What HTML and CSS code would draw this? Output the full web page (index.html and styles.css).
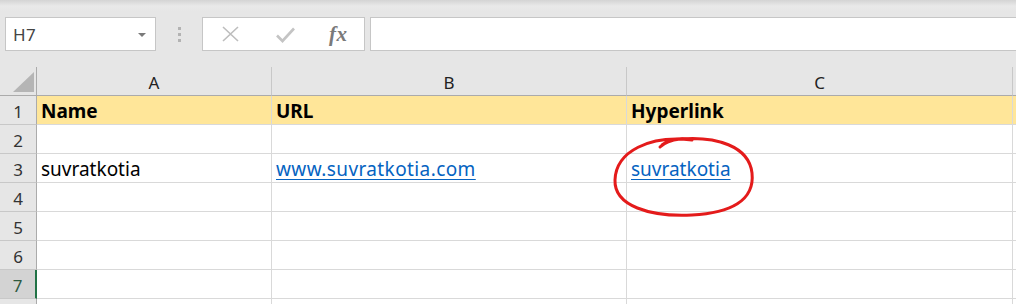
FILE: index.html
```html
<!DOCTYPE html>
<html>
<head>
<meta charset="utf-8">
<link rel="stylesheet" href="styles.css">
</head>
<body>
<div class="app">
  <div class="formula-row">
    <div class="namebox">
      <span class="ref">H7</span>
      <svg class="dd" width="8" height="4" viewBox="0 0 8 4"><path d="M0 0H8L4 4Z" fill="#7a7a7a"/></svg>
    </div>
    <div class="grip"><i></i><i></i><i></i></div>
    <div class="fbtns">
      <span class="btn b-x"><svg width="17" height="16" viewBox="0 0 17 16"><path d="M1 1L16 15M16 1L1 15" stroke="#bdbdbd" stroke-width="1.6" fill="none"/></svg></span>
      <span class="btn b-ok"><svg width="19" height="16" viewBox="0 0 19 16"><path d="M1 8.5L6.5 14L18 1.5" stroke="#c4c4c4" stroke-width="2.6" fill="none"/></svg></span>
      <span class="btn b-fx">fx</span>
    </div>
    <div class="finput"></div>
  </div>

  <div class="sheet">
    <div class="corner"><svg width="37" height="29" viewBox="0 0 37 29"><path d="M34 5V25H13Z" fill="#b5b5b5"/></svg></div>
    <div class="colh">A</div>
    <div class="colh">B</div>
    <div class="colh">C</div>
    <div class="colh last"></div>

    <div class="rowh">1</div>
    <div class="cell hdr"><b>Name</b></div>
    <div class="cell hdr"><b>URL</b></div>
    <div class="cell hdr"><b>Hyperlink</b></div>
    <div class="cell hdr"></div>

    <div class="rowh">2</div>
    <div class="cell"></div><div class="cell"></div><div class="cell"></div><div class="cell"></div>

    <div class="rowh">3</div>
    <div class="cell">suvratkotia</div>
    <div class="cell"><a class="link url">www.suvratkotia.com</a></div>
    <div class="cell"><a class="link">suvratkotia</a></div>
    <div class="cell"></div>

    <div class="rowh">4</div>
    <div class="cell"></div><div class="cell"></div><div class="cell"></div><div class="cell"></div>
    <div class="rowh">5</div>
    <div class="cell"></div><div class="cell"></div><div class="cell"></div><div class="cell"></div>
    <div class="rowh">6</div>
    <div class="cell"></div><div class="cell"></div><div class="cell"></div><div class="cell"></div>
    <div class="rowh sel">7</div>
    <div class="cell"></div><div class="cell"></div><div class="cell"></div><div class="cell"></div>
    <div class="rowh"></div>
    <div class="cell"></div><div class="cell"></div><div class="cell"></div><div class="cell"></div>
  </div>

  <svg class="annot" width="1016" height="304" viewBox="0 0 1016 304">
    <path d="M692 140 C650 135 616 151 615 180 C614 206 650 217 692 215 C730 213 755 201 752 173 C749 146 716 136 680 139 C672 140 664 143 660 147 M662 145 C668 140 678 138 688 139" stroke="#e41b1b" stroke-width="3" fill="none" stroke-linecap="round" stroke-linejoin="round"/>
  </svg>
</div>
</body>
</html>
```

FILE: styles.css
```css
* { box-sizing: border-box; }
html, body { margin: 0; padding: 0; }
body {
  width: 1016px;
  height: 304px;
  overflow: hidden;
  background: #e6e6e6;
  font-family: "Noto Sans", "Open Sans", sans-serif;
}
.app {
  position: relative;
  width: 1016px;
  height: 304px;
  overflow: hidden;
  background: linear-gradient(#d4d4d4 0px, #e9e9e9 6px, #e6e6e6 12px);
}
.formula-row {
  display: flex;
  height: 67px;
  padding: 17px 0 0 5px;
}
.namebox {
  width: 151px;
  height: 34px;
  background: #fff;
  border: 1px solid #c6c6c6;
  display: flex;
  align-items: center;
  justify-content: space-between;
  padding: 0 9px 0 7px;
}
.ref {
  font-size: 17px;
  color: #444;
  letter-spacing: 0.3px;
}
.dd { margin-top: 1px; }
.grip {
  width: 46px;
  height: 34px;
  display: flex;
  flex-direction: column;
  align-items: center;
  justify-content: center;
  gap: 3px;
  padding-top: 1px;
}
.grip i {
  display: block;
  width: 3px;
  height: 3px;
  background: #b3b3b3;
}
.fbtns {
  width: 163px;
  height: 34px;
  background: #fff;
  border: 1px solid #c6c6c6;
  display: flex;
  align-items: center;
  padding-left: 19px;
}
.btn { display: flex; align-items: center; }
.b-x { width: 54px; }
.b-ok { width: 53px; padding-top: 1px; }
.b-fx {
  font-family: "Liberation Serif", serif;
  font-style: italic;
  font-weight: bold;
  font-size: 21px;
  color: #7a7a7a;
  letter-spacing: 0.5px;
}
.finput {
  flex: 1;
  height: 34px;
  margin-left: 5px;
  margin-right: -3px;
  background: #fff;
  border: 1px solid #c6c6c6;
}

.sheet {
  display: grid;
  grid-template-columns: 37px 235px 355px 386px 1fr;
  grid-auto-rows: 29px;
}
.corner {
  border-right: 1px solid #ababab;
  border-bottom: 1px solid #ababab;
}
.corner svg { display: block; }
.colh {
  border-right: 1px solid #c8c8c8;
  border-bottom: 1px solid #ababab;
  display: flex;
  align-items: flex-end;
  justify-content: center;
  padding-bottom: 1px;
  font-size: 17px;
  color: #222;
  line-height: 22px;
}
.colh.last { border-right: none; }
.rowh {
  background: #e6e6e6;
  border-right: 1px solid #ababab;
  border-bottom: 1px solid #c8c8c8;
  display: flex;
  align-items: flex-end;
  justify-content: center;
  padding-bottom: 1px;
  font-size: 17px;
  color: #333;
  line-height: 22px;
}
.rowh.sel {
  background: #d3d3d3;
  border-right: 2px solid #217346;
  color: #2f5a40;
}
.cell {
  background: #fff;
  border-right: 1px solid #d9d9d9;
  border-bottom: 1px solid #d9d9d9;
  display: flex;
  align-items: flex-end;
  padding: 0 0 1px 4px;
  font-size: 19px;
  line-height: 23px;
  color: #000;
  white-space: nowrap;
}
.cell.hdr { background: #ffe699; }
.cell b { font-weight: bold; }
.link {
  color: #0563c1;
  text-decoration: underline;
  text-decoration-thickness: 1px;
  text-underline-offset: 3px;
}
.link.url { letter-spacing: 0.4px; }
.annot {
  position: absolute;
  left: 0;
  top: 0;
  pointer-events: none;
}
```
